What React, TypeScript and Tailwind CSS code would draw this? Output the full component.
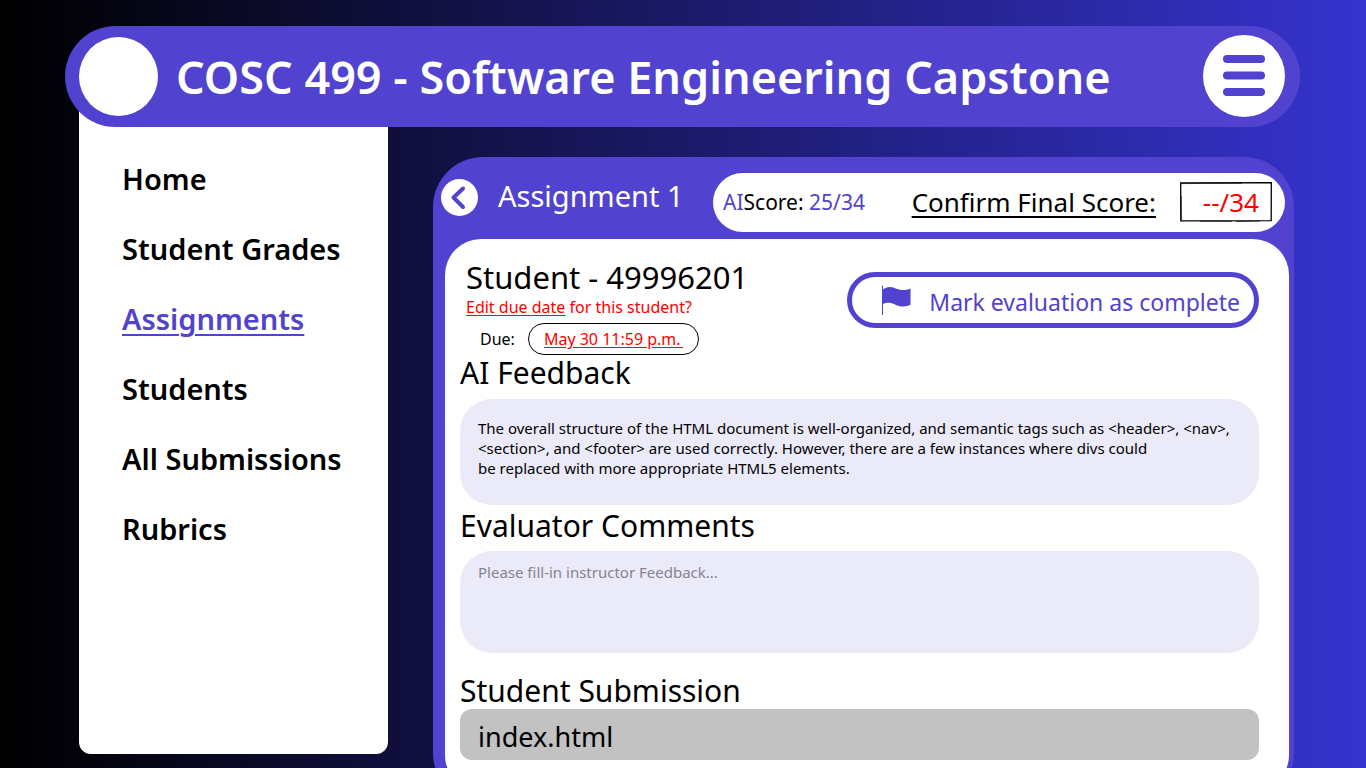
import React from "react";

const NAV_ITEMS = [
  { label: "Home", active: false },
  { label: "Student Grades", active: false },
  { label: "Assignments", active: true },
  { label: "Students", active: false },
  { label: "All Submissions", active: false },
  { label: "Rubrics", active: false },
];

function Header() {
  return (
    <header className="relative z-10 ml-[65px] mr-[66px] flex h-[101px] shrink-0 items-center rounded-full bg-[#5143d0] pl-[14px] pr-[15px]">
      <div className="size-[79px] shrink-0 rounded-full bg-white" />
      <h1 className="ml-[18px] flex-1 whitespace-nowrap text-[45px] font-semibold leading-[60px] text-white">
        COSC 499 - Software Engineering Capstone
      </h1>
      <button
        type="button"
        aria-label="Menu"
        className="mb-[2px] flex size-[82px] shrink-0 items-center justify-center rounded-full bg-white"
      >
        <svg width="42" height="42" viewBox="0 0 42 42" fill="#5143d0">
          <rect x="0" y="0" width="42" height="8" rx="4" />
          <rect x="0" y="16.5" width="42" height="8" rx="4" />
          <rect x="0" y="33" width="42" height="8" rx="4" />
        </svg>
      </button>
    </header>
  );
}

function Sidebar() {
  return (
    <nav className="-mt-[47px] mb-[14px] w-[309px] shrink-0 rounded-b-xl bg-white pl-[43px] pt-[79px]">
      <ul className="flex flex-col gap-[30px]">
        {NAV_ITEMS.map((item) => (
          <li key={item.label} className="whitespace-nowrap text-[29px] font-semibold leading-10">
            <a
              href="#"
              className={
                item.active
                  ? "text-[#5143d0] underline decoration-2 underline-offset-4"
                  : "text-black"
              }
            >
              {item.label}
            </a>
          </li>
        ))}
      </ul>
    </nav>
  );
}

function ScoreBar() {
  return (
    <div className="flex h-[59px] w-[572px] shrink-0 items-center rounded-full bg-white pb-[2px] pl-[10px] pr-[13px]">
      <p className="whitespace-nowrap text-[21px] leading-8 text-black">
        <span className="text-[#5143d0]">AI</span>Score: <span className="text-[#5143d0]">25/34</span>
      </p>
      <label
        htmlFor="final-score"
        className="ml-auto whitespace-nowrap text-[26px] leading-8 text-black underline decoration-2 underline-offset-4"
      >
        Confirm Final Score:
      </label>
      <div className="relative ml-6 h-10 w-[92px]">
        <svg className="absolute inset-0" width="92" height="40" viewBox="0 0 92 40" fill="none" stroke="#000">
          <path d="M.7 .8 L91.3 .7 L91.2 38.6 L.8 38.8 Z" strokeWidth="1.3" />
          <path d="M1 1.6 L62 1.2 M20 39.2 L52 39.4 M56 39.6 L80 39" strokeWidth=".7" />
          <path d="M1.2 14 L1.6 38" strokeWidth=".6" />
        </svg>
        <input
          id="final-score"
          defaultValue="--/34"
          className="relative h-10 w-full bg-transparent pr-[13px] text-right text-[26px] text-[#ff0000] outline-none"
        />
      </div>
    </div>
  );
}

function PanelHeader() {
  return (
    <div className="flex h-[82px] items-center pl-2 pr-[9px] pt-[9px]">
      <button
        type="button"
        aria-label="Back"
        className="mb-[11px] flex size-[37px] shrink-0 items-center justify-center rounded-full bg-white"
      >
        <svg width="37" height="37" viewBox="0 0 37 37" fill="none" stroke="#5143d0" strokeWidth="4" strokeLinecap="round" strokeLinejoin="round">
          <path d="M22 9.5 L12.5 18.5 L22 28" />
        </svg>
      </button>
      <h2 className="mb-[14px] ml-5 flex-1 whitespace-nowrap text-[29px] leading-10 text-white">Assignment 1</h2>
      <ScoreBar />
    </div>
  );
}

function StudentSummary() {
  return (
    <div className="flex items-start justify-between">
      <div className="pl-[6px]">
        <h3 className="whitespace-nowrap text-[31px] leading-10">Student - 49996201</h3>
        <p className="text-base leading-5 text-[#ff0000]">
          <a href="#" className="underline underline-offset-2">
            Edit due date
          </a>{" "}
          for this student?
        </p>
        <div className="mt-[6px] flex items-center gap-[13px] pl-[14px]">
          <label htmlFor="due" className="text-base leading-6">
            Due:
          </label>
          <input
            id="due"
            defaultValue="May 30 11:59 p.m. "
            className="h-8 w-[171px] rounded-full border border-black bg-white px-[15px] text-base text-[#ff0000] underline underline-offset-2 outline-none"
          />
        </div>
      </div>
      <button
        type="button"
        className="mt-[15px] flex h-14 w-[412px] items-center justify-end rounded-full border-5 border-[#5143d0] bg-white pr-[14px] text-[#5143d0]"
      >
        <svg className="mr-[18px]" width="29" height="30" viewBox="0 0 29 30" fill="#5143d0">
          <path d="M0 .5 H1 V4.5 C4 1.6 9 1.2 13 3.2 C18 5.4 23 5.8 28.5 3.5 V19.8 C24 22 18 22 13 19.4 C9 17.3 5 17 1 19 V30 H0 Z" />
        </svg>
        <span className="whitespace-nowrap pt-1 text-[23px] leading-8">Mark evaluation as complete</span>
      </button>
    </div>
  );
}

function Panel() {
  return (
    <main className="ml-[45px] mr-[72px] mt-[30px] h-[646px] min-w-0 flex-1 rounded-[50px] bg-[#5143d0]">
      <PanelHeader />
      <section className="ml-3 mr-[5px] h-[552px] rounded-[36px] bg-white pl-[15px] pr-[30px] pt-[18px] text-black">
        <StudentSummary />
        <h3 className="text-[30px] leading-9">AI Feedback</h3>
        <div className="mt-2 h-[106px] rounded-[32px] bg-[#ebeaf8] pl-[18px] pt-[19px] text-[15px] leading-5">
          <p>
            The overall structure of the HTML document is well-organized, and semantic tags such as &lt;header&gt;, &lt;nav&gt;,
            <br />
            &lt;section&gt;, and &lt;footer&gt; are used correctly. However, there are a few instances where divs could
            <br />
            be replaced with more appropriate HTML5 elements.
          </p>
        </div>
        <h3 className="mt-[3px] text-[30px] leading-9">
          <label htmlFor="comments">Evaluator Comments</label>
        </h3>
        <textarea
          id="comments"
          placeholder="Please fill-in instructor Feedback..."
          className="mt-[7px] block h-[102px] w-full resize-none rounded-[32px] bg-[#ebeaf8] px-[18px] pt-[11px] text-[15px] leading-5 outline-none placeholder:text-[#858491]"
        />
        <h3 className="mt-5 text-[30px] leading-9">Student Submission</h3>
        <div className="flex h-[51px] items-center rounded-xl bg-[#c2c2c2] pl-[18px] pt-1 text-[27px] leading-10">
          index.html
        </div>
      </section>
    </main>
  );
}

export default function App() {
  return (
    <div className="flex h-screen flex-col overflow-hidden bg-linear-to-r/srgb from-black to-[#3633cf] pt-[26px] font-['Noto_Sans',sans-serif]">
      <Header />
      <div className="flex min-h-0 flex-1 pl-[79px]">
        <Sidebar />
        <Panel />
      </div>
    </div>
  );
}
